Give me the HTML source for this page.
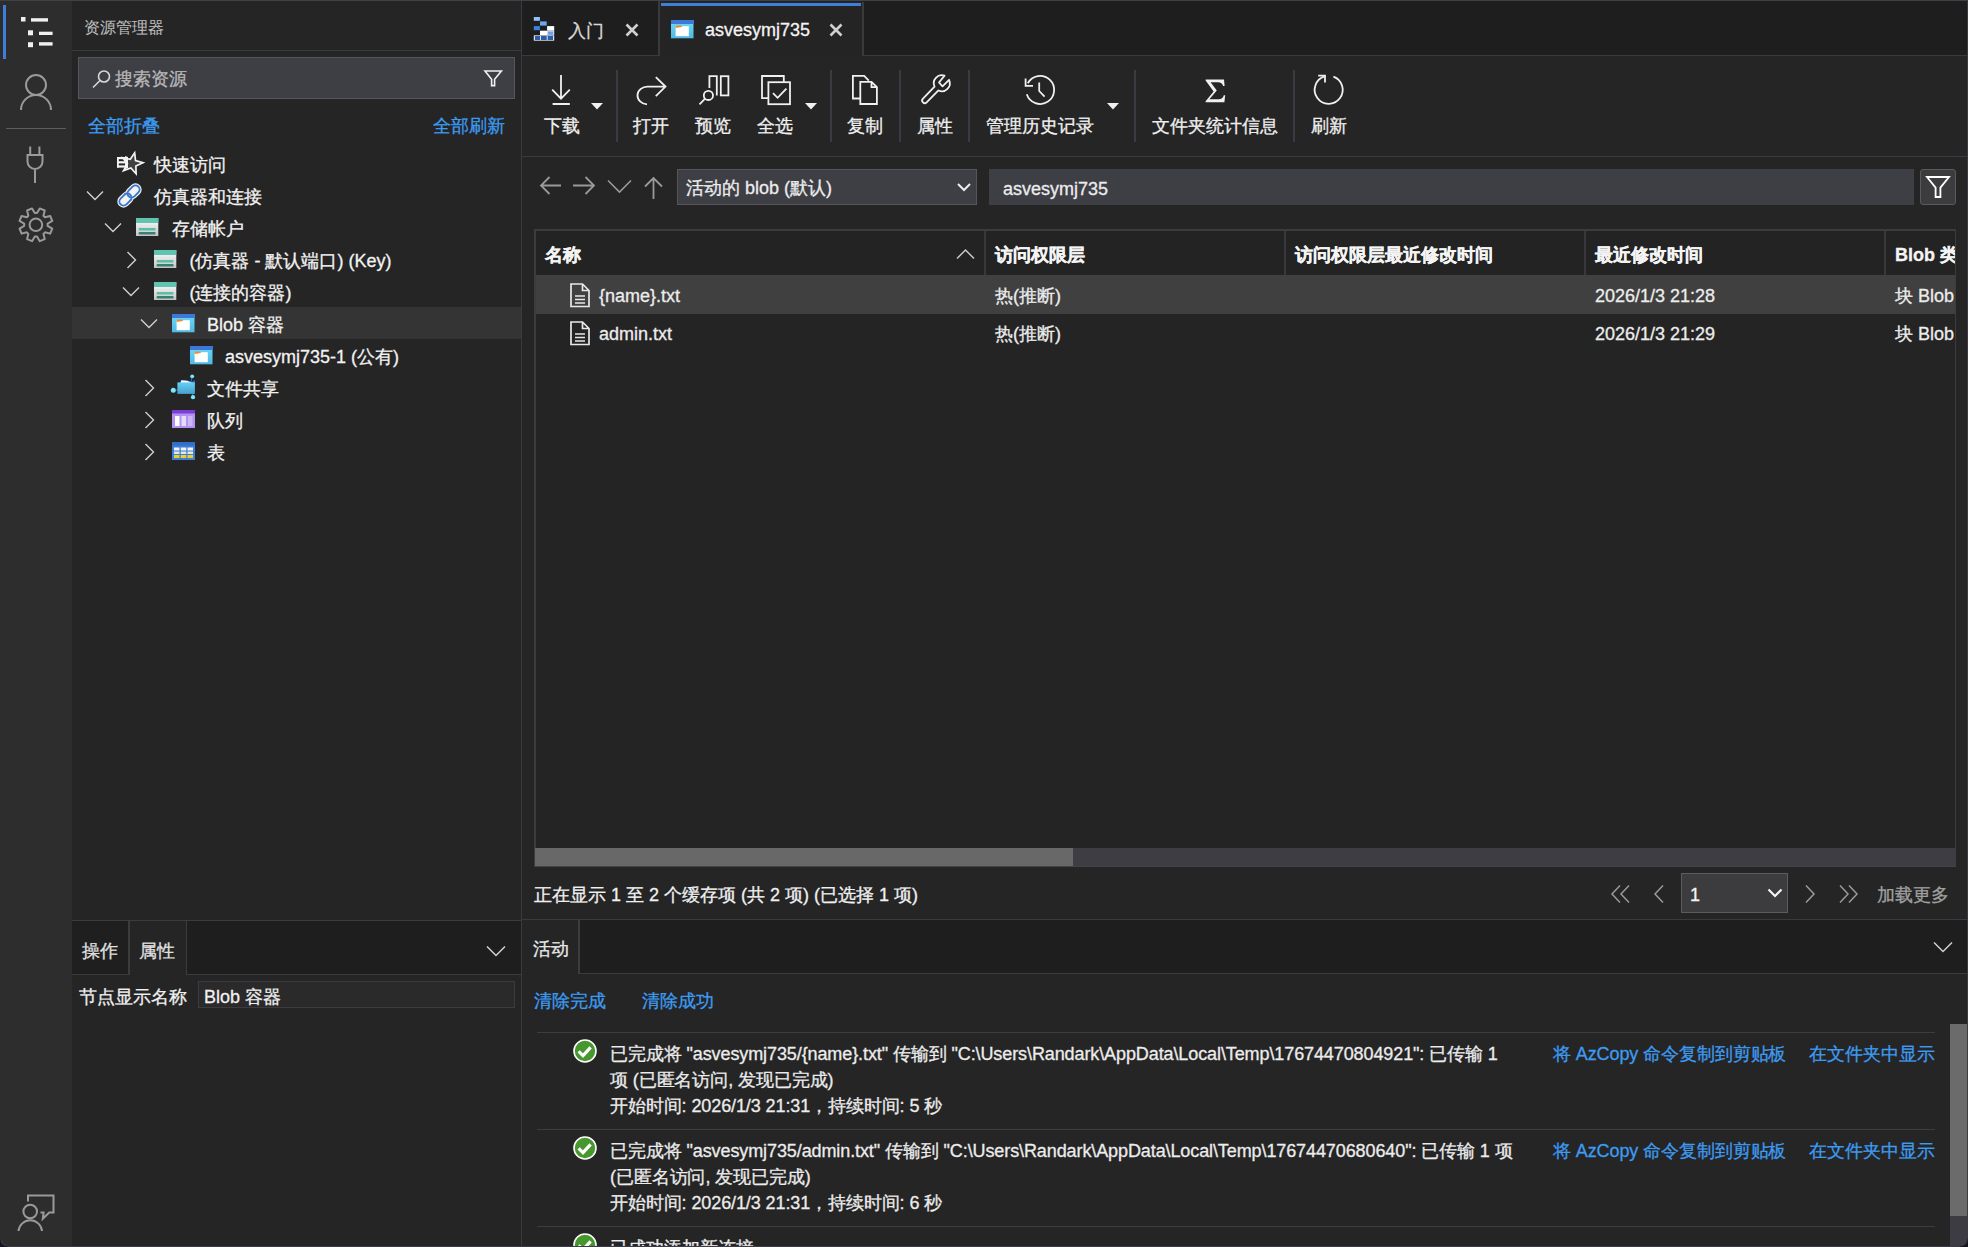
<!DOCTYPE html>
<html><head><meta charset="utf-8">
<style>
*{box-sizing:border-box}
html,body{margin:0;padding:0}
body{width:1968px;height:1247px;overflow:hidden;position:relative;background:#252525;font-family:"Liberation Sans",sans-serif;color:#e8e8e8;font-size:18px}
.a{position:absolute}
.t{position:absolute;white-space:nowrap;line-height:1;margin-top:1px;-webkit-text-stroke:0.3px currentColor}
svg{position:absolute;overflow:visible}
.hl{position:absolute;height:1px;background:#3a3a40}
.vl{position:absolute;width:1px;background:#3a3a40}
.lnk{color:#3d9bf0}
</style></head><body>
<!-- top border -->
<div class="a" style="left:0;top:0;width:1968px;height:1px;background:#404048"></div>

<!-- ACTIVITY BAR -->
<div id="act" class="a" style="left:0;top:1px;width:72px;height:1246px;background:#2d2d2d"></div>
<div class="a" style="left:3px;top:5px;width:3px;height:54px;background:#3b7fd8"></div>


<!-- activity icons -->
<svg style="left:0;top:0" width="72" height="260">
 <g fill="#f0f0f0">
  <rect x="21" y="17" width="4.5" height="4.5"/><rect x="31" y="18.2" width="17" height="3.4"/>
  <rect x="28" y="30.3" width="5" height="5"/><rect x="39" y="31.7" width="13.6" height="3.3"/>
  <rect x="28" y="42.2" width="5" height="5"/><rect x="39" y="42.2" width="13.6" height="3.4"/>
 </g>
 <g fill="none" stroke="#9a9a9a" stroke-width="2">
  <circle cx="36" cy="85" r="10"/>
  <path d="M21 110 A15 15 0 0 1 51 110"/>
  <path d="M30.2 146.5 V155 M39.4 146.5 V155 M27.5 155 H42.5 V161.5 A7.5 7.5 0 0 1 27.5 161.5 Z M35 169 V183"/>
  <circle cx="35.9" cy="224.8" r="6.3"/>
  <path d="M36.99 213.05 L39.77 208.45 L44.72 210.50 L43.44 215.72 L44.98 217.26 L50.20 215.98 L52.25 220.93 L47.65 223.71 L47.65 225.89 L52.25 228.67 L50.20 233.62 L44.98 232.34 L43.44 233.88 L44.72 239.10 L39.77 241.15 L36.99 236.55 L34.81 236.55 L32.03 241.15 L27.08 239.10 L28.36 233.88 L26.82 232.34 L21.60 233.62 L19.55 228.67 L24.15 225.89 L24.15 223.71 L19.55 220.93 L21.60 215.98 L26.82 217.26 L28.36 215.72 L27.08 210.50 L32.03 208.45 L34.81 213.05 Z" stroke-linejoin="round"/>
 </g>
 <rect x="6" y="128" width="60" height="1" fill="#5e5e5e"/>
</svg>
<svg style="left:0;top:1180" width="72" height="67">
 <g fill="none" stroke="#9a9a9a" stroke-width="2">
  <path d="M28 21.5 V15.5 H53.5 V32.5 H49.2 L42.8 38.8 L43.6 32.5 H40.5"/>
  <circle cx="30.2" cy="31.5" r="6.8"/>
  <path d="M18.5 51 A11.8 11.8 0 0 1 42 51"/>
 </g>
</svg>

<!-- EXPLORER PANEL -->
<div id="exp" class="a" style="left:72px;top:1px;width:449px;height:1246px;background:#252525"></div>

<div class="t" style="left:84px;top:19px;font-size:16px;color:#bcbcbc;-webkit-text-stroke:0.1px currentColor">资源管理器</div>
<div class="hl" style="left:72px;top:50px;width:449px;background:#3a3a40"></div>
<div class="a" style="left:78px;top:57px;width:437px;height:42px;background:#3e3f45;border:1px solid #56565c"></div>
<svg style="left:90px;top:68px" width="24" height="24"><g fill="none" stroke="#d8d8d8" stroke-width="1.6"><circle cx="14" cy="8.5" r="5.5"/><path d="M10 12.5 L3 19.5"/></g></svg>
<div class="t" style="left:115px;top:69px;font-size:18px;color:#b8b8b8">搜索资源</div>
<svg style="left:0;top:0" width="520" height="120"><path d="M485 71 H501.4 L494.6 79.2 V85.6 H491.6 V79.2 Z" fill="none" stroke="#f0f0f0" stroke-width="1.6" stroke-linejoin="miter"/></svg>
<div class="t lnk" style="left:88px;top:116px;font-size:18px">全部折叠</div>
<div class="t lnk" style="left:433px;top:116px;font-size:18px">全部刷新</div>
<!-- selected row -->
<div class="a" style="left:72px;top:307px;width:449px;height:32px;background:#343434"></div>
<svg style="left:117px;top:152px" width="26" height="26"><path d="M17.66 0.83 L18.52 8.54 L25.97 10.73 L18.90 13.94 L19.12 21.70 L13.89 15.96 L6.57 18.57 L10.41 11.82 L5.67 5.67 L13.28 7.23 Z" fill="#404040" stroke="#f4f4f4" stroke-width="1.7" stroke-linejoin="miter"/><g fill="#f4f4f4"><rect x="0" y="5" width="9" height="2.2"/><rect x="0" y="9.2" width="9" height="2.2"/><rect x="0" y="13.4" width="9" height="2.2"/><rect x="0" y="5" width="1.8" height="10.6"/><path d="M8 4 L11 5 L11 16 L8 17 Z"/></g></svg>
<div class="t" style="left:154px;top:155px;font-size:18px;color:#f2f2f2">快速访问</div>
<svg style="left:86px;top:190px" width="18" height="12"><path d="M1 1.5 L9 9.5 L17 1.5" fill="none" stroke="#d0d0d0" stroke-width="1.4"/></svg>
<svg style="left:116px;top:182px" width="27" height="27"><g transform="translate(9.5 17.5) rotate(-45)"><rect x="-8.2" y="-5.4" width="16.4" height="10.8" rx="5.4" fill="#f4f4f4" stroke="#f4f4f4" stroke-width="1.6"/><rect x="-6.9" y="-4.1" width="13.8" height="8.2" rx="4.1" fill="none" stroke="#3a78d0" stroke-width="1.9"/></g><g transform="translate(17.5 9.5) rotate(-45)"><rect x="-8.2" y="-5.4" width="16.4" height="10.8" rx="5.4" fill="#f4f4f4" stroke="#f4f4f4" stroke-width="1.6"/><rect x="-6.9" y="-4.1" width="13.8" height="8.2" rx="4.1" fill="none" stroke="#3a78d0" stroke-width="1.9"/></g><g transform="translate(9.5 17.5) rotate(-45)"><path d="M2.6 -4.1 A4.1 4.1 0 0 1 2.6 4.1" fill="none" stroke="#3a78d0" stroke-width="1.9"/></g></svg>
<div class="t" style="left:154px;top:187px;font-size:18px;color:#f2f2f2">仿真器和连接</div>
<svg style="left:104px;top:222px" width="18" height="12"><path d="M1 1.5 L9 9.5 L17 1.5" fill="none" stroke="#d0d0d0" stroke-width="1.4"/></svg>
<svg style="left:135.6px;top:218px" width="23" height="18"><defs><linearGradient id="sg" x1="0" y1="0" x2="0" y2="1"><stop offset="0" stop-color="#ffffff"/><stop offset="1" stop-color="#c4c4c4"/></linearGradient></defs><rect x="0" y="0" width="22.3" height="18" fill="url(#sg)"/><rect x="0" y="0" width="22.3" height="5" fill="#62c4b0"/><rect x="2.6" y="10" width="17" height="2.6" rx="1" fill="#56c0a8"/><rect x="2.6" y="14" width="17" height="2.6" rx="1" fill="#3a7f70"/></svg>
<div class="t" style="left:171.6px;top:219px;font-size:18px;color:#f2f2f2">存储帐户</div>
<svg style="left:126px;top:251px" width="12" height="18"><path d="M1.5 1 L9.5 9 L1.5 17" fill="none" stroke="#d0d0d0" stroke-width="1.4"/></svg>
<svg style="left:154px;top:250px" width="23" height="18"><defs><linearGradient id="sg" x1="0" y1="0" x2="0" y2="1"><stop offset="0" stop-color="#ffffff"/><stop offset="1" stop-color="#c4c4c4"/></linearGradient></defs><rect x="0" y="0" width="22.3" height="18" fill="url(#sg)"/><rect x="0" y="0" width="22.3" height="5" fill="#62c4b0"/><rect x="2.6" y="10" width="17" height="2.6" rx="1" fill="#56c0a8"/><rect x="2.6" y="14" width="17" height="2.6" rx="1" fill="#3a7f70"/></svg>
<div class="t" style="left:189.5px;top:251px;font-size:18px;color:#f2f2f2">(仿真器 - 默认端口) (Key)</div>
<svg style="left:122px;top:286px" width="18" height="12"><path d="M1 1.5 L9 9.5 L17 1.5" fill="none" stroke="#d0d0d0" stroke-width="1.4"/></svg>
<svg style="left:154px;top:282px" width="23" height="18"><defs><linearGradient id="sg" x1="0" y1="0" x2="0" y2="1"><stop offset="0" stop-color="#ffffff"/><stop offset="1" stop-color="#c4c4c4"/></linearGradient></defs><rect x="0" y="0" width="22.3" height="18" fill="url(#sg)"/><rect x="0" y="0" width="22.3" height="5" fill="#62c4b0"/><rect x="2.6" y="10" width="17" height="2.6" rx="1" fill="#56c0a8"/><rect x="2.6" y="14" width="17" height="2.6" rx="1" fill="#3a7f70"/></svg>
<div class="t" style="left:189.5px;top:283px;font-size:18px;color:#f2f2f2">(连接的容器)</div>
<svg style="left:140px;top:318px" width="18" height="12"><path d="M1 1.5 L9 9.5 L17 1.5" fill="none" stroke="#d0d0d0" stroke-width="1.4"/></svg>
<svg style="left:171.6px;top:314px" width="23" height="18"><defs><linearGradient id="bg1" x1="0" y1="0" x2="0" y2="1"><stop offset="0" stop-color="#6cdaf8"/><stop offset="1" stop-color="#52b8e4"/></linearGradient></defs><rect x="0" y="0" width="22.5" height="18.3" fill="url(#bg1)"/><rect x="0" y="0" width="22.5" height="4" fill="#3b78d8"/><rect x="4.6" y="6.2" width="13.2" height="10" fill="#ffffff"/><path d="M4.6 8 V6 Q4.6 5.4 5.4 5.4 H10 Q10.8 5.4 10.8 6.4 V7 Z" fill="#f08a2c"/></svg>
<div class="t" style="left:207px;top:315px;font-size:18px;color:#f2f2f2">Blob 容器</div>
<svg style="left:190px;top:346px" width="23" height="18"><defs><linearGradient id="bg1" x1="0" y1="0" x2="0" y2="1"><stop offset="0" stop-color="#6cdaf8"/><stop offset="1" stop-color="#52b8e4"/></linearGradient></defs><rect x="0" y="0" width="22.5" height="18.3" fill="url(#bg1)"/><rect x="0" y="0" width="22.5" height="4" fill="#3b78d8"/><rect x="4.6" y="6.2" width="13.2" height="10" fill="#ffffff"/><path d="M4.6 8 V6 Q4.6 5.4 5.4 5.4 H10 Q10.8 5.4 10.8 6.4 V7 Z" fill="#f08a2c"/></svg>
<div class="t" style="left:225px;top:347px;font-size:18px;color:#f2f2f2">asvesymj735-1 (公有)</div>
<svg style="left:144px;top:379px" width="12" height="18"><path d="M1.5 1 L9.5 9 L1.5 17" fill="none" stroke="#d0d0d0" stroke-width="1.4"/></svg>
<svg style="left:165px;top:370px" width="35" height="35"><defs><linearGradient id="fsg" x1="0" y1="0" x2="0" y2="1"><stop offset="0" stop-color="#66d2f4"/><stop offset="1" stop-color="#489ed0"/></linearGradient></defs><path d="M26.8 8 L26.4 11.5 M11 20.1 H13 M27.2 23.5 L27.9 25.5" stroke="#2f6fc4" stroke-width="1"/><path d="M14.8 12.5 L16 10 L22 10.4 L27 11.6 L30 10.2 V13 H14.8 Z" fill="#2a66c0"/><path d="M15.8 12.2 L16.4 10.2 L22 10.8 L26.6 12.6 L26.6 13.2 H15.8 Z" fill="#f4f8ff"/><rect x="12.4" y="12.4" width="17.5" height="11.5" fill="url(#fsg)"/><circle cx="27.2" cy="6.3" r="1.9" fill="#7ae6fa"/><circle cx="8.3" cy="20.2" r="2.5" fill="#7ae6fa"/><circle cx="28" cy="27.2" r="2.1" fill="#7ae6fa"/></svg>
<div class="t" style="left:207px;top:379px;font-size:18px;color:#f2f2f2">文件共享</div>
<svg style="left:144px;top:411px" width="12" height="18"><path d="M1.5 1 L9.5 9 L1.5 17" fill="none" stroke="#d0d0d0" stroke-width="1.4"/></svg>
<svg style="left:171.6px;top:410px" width="23" height="18"><rect x="0" y="0" width="23" height="18" fill="#b393f0"/><rect x="0" y="0" width="23" height="3.5" fill="#7a3fd6"/><rect x="3" y="6" width="4.5" height="10" fill="#ffffff"/><rect x="9.5" y="6" width="4.5" height="10" fill="#e6dcfa"/><rect x="16" y="6" width="4.5" height="10" fill="#cbb6f6"/></svg>
<div class="t" style="left:207px;top:411px;font-size:18px;color:#f2f2f2">队列</div>
<svg style="left:144px;top:443px" width="12" height="18"><path d="M1.5 1 L9.5 9 L1.5 17" fill="none" stroke="#d0d0d0" stroke-width="1.4"/></svg>
<svg style="left:171.6px;top:442px" width="23" height="18"><rect x="0" y="0" width="23" height="18" fill="#3d7fd6"/><rect x="0" y="0" width="23" height="3.5" fill="#3070c8"/><g fill="#f4f4f4"><rect x="2" y="5.5" width="5.5" height="3"/><rect x="8.8" y="5.5" width="5.5" height="3"/><rect x="15.5" y="5.5" width="5.5" height="3"/></g><g fill="#e6e6e6"><rect x="2" y="9.5" width="5.5" height="2.5"/><rect x="8.8" y="9.5" width="5.5" height="2.5"/><rect x="15.5" y="9.5" width="5.5" height="2.5"/></g><g fill="#f0d020"><rect x="2" y="13" width="5.5" height="3"/><rect x="8.8" y="13" width="5.5" height="3"/><rect x="15.5" y="13" width="5.5" height="3"/></g></svg>
<div class="t" style="left:207px;top:443px;font-size:18px;color:#f2f2f2">表</div>
<div class="vl" style="left:521px;top:1px;height:1246px;background:#3a3a40"></div>

<!-- MAIN -->
<div id="tabbar" class="a" style="left:522px;top:1px;width:1446px;height:55px;background:#1e1e1e"></div>


<!-- tabs -->
<div class="a" style="left:522px;top:1px;width:138px;height:55px;background:#1e1e1e;border-right:2px solid #3a3a3a;border-bottom:1px solid #3a3a3a"></div>
<div class="a" style="left:864px;top:55px;width:1104px;height:1px;background:#3a3a3a"></div>
<div class="a" style="left:660px;top:1px;width:202px;height:55px;background:#242424"></div>
<div class="a" style="left:862px;top:2px;width:2px;height:54px;background:#3a3a3a"></div>
<div class="a" style="left:661px;top:3px;width:200px;height:3px;background:#3b7fd8"></div>
<svg style="left:528px;top:12px" width="32" height="32"><rect x="5.8" y="5" width="6.1" height="3.8" fill="#92c0fa"/><rect x="12" y="9.4" width="6.7" height="4.2" fill="#6ea6f2"/><rect x="5.8" y="14.1" width="6.1" height="4.1" fill="#3d80e0"/><rect x="19.1" y="14.1" width="7.1" height="4.6" fill="#ffffff"/><rect x="12" y="18.7" width="7.1" height="4.3" fill="#ffffff"/><rect x="19.1" y="18.7" width="7.1" height="4.3" fill="#dfe8f6"/><rect x="20" y="19.5" width="5.2" height="3.3" fill="#6aa0ee"/><rect x="5.8" y="23.3" width="20.4" height="5.4" fill="#e4e4e4"/><rect x="7" y="24" width="5" height="4" fill="#2a5cb0"/><rect x="13" y="24" width="5.7" height="4" fill="#2a5cb0"/><rect x="19.7" y="24" width="5.3" height="4" fill="#2a5cb0"/></svg>
<div class="t" style="left:568px;top:21px;font-size:18px;color:#d8d8d8">入门</div>
<svg style="left:625px;top:23px" width="14" height="14"><path d="M1.5 1.5 L12.5 12.5 M12.5 1.5 L1.5 12.5" stroke="#d0d0d0" stroke-width="2.6"/></svg>
<svg style="left:671px;top:20px" width="23" height="19"><defs><linearGradient id="bg1" x1="0" y1="0" x2="0" y2="1"><stop offset="0" stop-color="#6cdaf8"/><stop offset="1" stop-color="#52b8e4"/></linearGradient></defs><rect x="0" y="0" width="22.5" height="18.3" fill="url(#bg1)"/><rect x="0" y="0" width="22.5" height="4" fill="#3b78d8"/><rect x="4.6" y="6.2" width="13.2" height="10" fill="#ffffff"/><path d="M4.6 8 V6 Q4.6 5.4 5.4 5.4 H10 Q10.8 5.4 10.8 6.4 V7 Z" fill="#f08a2c"/></svg>
<div class="t" style="left:705px;top:20px;font-size:18px;color:#f4f4f4">asvesymj735</div>
<svg style="left:829px;top:23px" width="14" height="14"><path d="M1.5 1.5 L12.5 12.5 M12.5 1.5 L1.5 12.5" stroke="#d0d0d0" stroke-width="2.6"/></svg>

<!-- toolbar -->
<div class="hl" style="left:522px;top:156px;width:1446px;background:#3a3a40"></div>
<div class="a" style="left:616px;top:70px;width:2px;height:72px;background:#3a3a42"></div>
<div class="a" style="left:830px;top:70px;width:2px;height:72px;background:#3a3a42"></div>
<div class="a" style="left:899px;top:70px;width:2px;height:72px;background:#3a3a42"></div>
<div class="a" style="left:968px;top:70px;width:2px;height:72px;background:#3a3a42"></div>
<div class="a" style="left:1134px;top:70px;width:2px;height:72px;background:#3a3a42"></div>
<div class="a" style="left:1293px;top:70px;width:2px;height:72px;background:#3a3a42"></div>
<div class="t" style="left:462px;width:200px;text-align:center;top:116px;font-size:18px;color:#f0f0f0">下载</div>
<div class="t" style="left:551px;width:200px;text-align:center;top:116px;font-size:18px;color:#f0f0f0">打开</div>
<div class="t" style="left:613px;width:200px;text-align:center;top:116px;font-size:18px;color:#f0f0f0">预览</div>
<div class="t" style="left:675px;width:200px;text-align:center;top:116px;font-size:18px;color:#f0f0f0">全选</div>
<div class="t" style="left:765px;width:200px;text-align:center;top:116px;font-size:18px;color:#f0f0f0">复制</div>
<div class="t" style="left:834.5px;width:200px;text-align:center;top:116px;font-size:18px;color:#f0f0f0">属性</div>
<div class="t" style="left:940px;width:200px;text-align:center;top:116px;font-size:18px;color:#f0f0f0">管理历史记录</div>
<div class="t" style="left:1114.5px;width:200px;text-align:center;top:116px;font-size:18px;color:#f0f0f0">文件夹统计信息</div>
<div class="t" style="left:1229px;width:200px;text-align:center;top:116px;font-size:18px;color:#f0f0f0">刷新</div>
<svg style="left:591px;top:102.8px" width="12" height="7"><path d="M0 0 H12 L6 6.5 Z" fill="#f0f0f0"/></svg>
<svg style="left:805px;top:102.8px" width="12" height="7"><path d="M0 0 H12 L6 6.5 Z" fill="#f0f0f0"/></svg>
<svg style="left:1106.5px;top:102.8px" width="12" height="7"><path d="M0 0 H12 L6 6.5 Z" fill="#f0f0f0"/></svg>

<svg style="left:0;top:0" width="1968" height="240"><path d="M1205.6 79.4 H1224 L1224.6 86 H1223.2 Q1222.2 82.2 1218 82.2 H1210.6 L1216.8 90.6 L1209.4 99.2 H1218.6 Q1222.8 99.2 1223.8 95.2 H1225.2 L1224.4 102.2 H1205.6 V101.2 L1213.6 91.4 L1205.6 80.6 Z" fill="#f0f0f0"/></svg>


<!-- toolbar icons overlay -->
<svg style="left:0;top:0" width="1968" height="240">
<g fill="none" stroke="#f0f0f0" stroke-width="1.8">
 <path d="M561 75 V99 M552.2 89.6 L561 98.6 L569.8 89.6 M552.6 104 H569.8"/>
 <path d="M665.5 86.6 H648 A10 8.9 0 0 0 647 104.4 M655.8 77.2 L665.5 86.6 L655.8 96.2"/>
 <path d="M709.4 88 V76.2 H716.8 V95.4"/><rect x="720.8" y="76.2" width="7.6" height="19.2"/>
 <circle cx="708.4" cy="95.4" r="4.6"/><path d="M705.1 98.7 L699.5 104.3"/>
 <path d="M768 98.2 H762 V76 H783.8 V82"/><rect x="768.4" y="82.2" width="21.6" height="22"/><path d="M773 93.2 L777.6 97.8 L786.4 88.6"/>
 <path d="M860.2 98.5 H852.9 V75.9 H864.2 L868.8 80.6"/><path d="M860.3 104 V81.8 H871.5 L876.9 87.2 V104 Z M871.5 81.8 V87.2 H876.9"/>
 <path stroke-linejoin="round" d="M934.55 86.58 A8 8 0 0 1 944.54 75.68 L939 82.5 L942.5 86.4 L949.05 79.82 A8 8 0 0 1 938.42 90.45 L926.64 102.34 A2.6 2.6 0 0 1 922.96 98.66 Z"/>
 <path d="M1027.8 83.3 A14 14 0 1 1 1026.8 94.3"/><path d="M1025.6 78.4 V85.8 H1033"/><path d="M1039.2 82.6 V91 L1044.6 96.6"/>
 <path d="M1324.6 76.4 A14 14 0 1 0 1333.4 76.6"/><path d="M1318.2 75.7 H1325 V82.6"/>
</g>
</svg>

<!-- address row -->
<svg style="left:538px;top:175px" width="26" height="22"><g fill="none" stroke="#9a9a9a" stroke-width="1.8"><path d="M23 10.5 H3 M11.5 2 L3 10.5 L11.5 19"/></g></svg>
<svg style="left:572px;top:175px" width="26" height="22"><g fill="none" stroke="#9a9a9a" stroke-width="1.8"><path d="M1 10.5 H22 M13.5 2 L22 10.5 L13.5 19"/></g></svg>
<svg style="left:607px;top:179px" width="26" height="16"><g fill="none" stroke="#9a9a9a" stroke-width="1.6"><path d="M1 1.5 L12.5 13 L24 1.5"/></g></svg>
<svg style="left:643px;top:176px" width="24" height="24"><g fill="none" stroke="#9a9a9a" stroke-width="1.8"><path d="M10.5 23 V2 M2 10.5 L10.5 2 L19 10.5"/></g></svg>
<div class="a" style="left:677px;top:169px;width:300px;height:36px;background:#3e3f45;border:1px solid #55555b"></div>
<div class="t" style="left:686px;top:178px;font-size:18px;color:#ececec">活动的 blob (默认)</div>
<svg style="left:957px;top:183px" width="14" height="9"><path d="M1 1 L7 7 L13 1" fill="none" stroke="#ececec" stroke-width="2"/></svg>
<div class="a" style="left:989px;top:169px;width:925px;height:36px;background:#3e3f45"></div>
<div class="t" style="left:1003px;top:179px;font-size:18px;color:#ececec">asvesymj735</div>
<div class="a" style="left:1920px;top:169px;width:36px;height:36px;background:#3c3c3e;border:1px solid #5a5a5a;border-radius:3px"></div>
<svg style="left:0;top:0" width="1968" height="240"><path d="M1927 177 H1949 L1940.4 187.6 V197 H1935.6 V187.6 Z" fill="none" stroke="#ffffff" stroke-width="1.8"/></svg>


<!-- TABLE -->
<div class="a" style="left:534px;top:229px;width:1422px;height:638px;border:2px solid #3c3c3c;border-right:1px solid #3c3c3c;border-bottom:1px solid #444444;background:#242424"></div>
<div class="a" style="left:536px;top:231px;width:1419px;height:44px;background:#232323"></div>
<div class="a" style="left:536px;top:275px;width:1419px;height:39px;background:#404040"></div>
<div class="a" style="left:984px;top:231px;width:2px;height:44px;background:#38383c"></div>
<div class="a" style="left:1284px;top:231px;width:2px;height:44px;background:#38383c"></div>
<div class="a" style="left:1584px;top:231px;width:2px;height:44px;background:#38383c"></div>
<div class="a" style="left:1884px;top:231px;width:2px;height:44px;background:#38383c"></div>
<div class="a" style="left:536px;top:231px;width:1419px;height:44px;overflow:hidden">
<div class="t" style="left:9px;top:14px;font-size:18px;font-weight:bold;color:#f4f4f4">名称</div>
<div class="t" style="left:459px;top:14px;font-size:18px;font-weight:bold;color:#f4f4f4">访问权限层</div>
<div class="t" style="left:759px;top:14px;font-size:18px;font-weight:bold;color:#f4f4f4">访问权限层最近修改时间</div>
<div class="t" style="left:1059px;top:14px;font-size:18px;font-weight:bold;color:#f4f4f4">最近修改时间</div>
<div class="t" style="left:1359px;top:14px;font-size:18px;font-weight:bold;color:#f4f4f4">Blob 类型</div>
</div>
<svg style="left:956px;top:248px" width="20" height="12"><path d="M1 10.5 L9.5 2 L18 10.5" fill="none" stroke="#c8c8c8" stroke-width="1.5"/></svg>
<div class="a" style="left:536px;top:275px;width:1419px;height:80px;overflow:hidden">
<svg style="left:34px;top:8px" width="21" height="25"><path d="M1 1 H12.5 L19 7.5 V23.5 H1 Z M12.5 1 V7.5 H19" fill="none" stroke="#e8e8e8" stroke-width="1.7"/><path d="M5 13 H15 M5 16.5 H15 M5 20 H15" stroke="#e8e8e8" stroke-width="1.5"/></svg>
<div class="t" style="left:63px;top:11px;font-size:18px;color:#ececec">{name}.txt</div>
<div class="t" style="left:459px;top:11px;font-size:18px;color:#ececec">热(推断)</div>
<div class="t" style="left:1059px;top:11px;font-size:18px;color:#ececec">2026/1/3 21:28</div>
<div class="t" style="left:1359px;top:11px;font-size:18px;color:#ececec">块 Blob</div>
<svg style="left:34px;top:46px" width="21" height="25"><path d="M1 1 H12.5 L19 7.5 V23.5 H1 Z M12.5 1 V7.5 H19" fill="none" stroke="#e8e8e8" stroke-width="1.7"/><path d="M5 13 H15 M5 16.5 H15 M5 20 H15" stroke="#e8e8e8" stroke-width="1.5"/></svg>
<div class="t" style="left:63px;top:49px;font-size:18px;color:#ececec">admin.txt</div>
<div class="t" style="left:459px;top:49px;font-size:18px;color:#ececec">热(推断)</div>
<div class="t" style="left:1059px;top:49px;font-size:18px;color:#ececec">2026/1/3 21:29</div>
<div class="t" style="left:1359px;top:49px;font-size:18px;color:#ececec">块 Blob</div>
</div>

<!-- h scrollbar -->
<div class="a" style="left:535px;top:848px;width:1421px;height:18px;background:#3e3d43"></div>
<div class="a" style="left:535px;top:848px;width:538px;height:18px;background:#686868"></div>

<!-- status row -->
<div class="t" style="left:534px;top:885px;font-size:18px;color:#f0f0f0">正在显示 1 至 2 个缓存项 (共 2 项) (已选择 1 项)</div>
<svg style="left:1610px;top:884px" width="22" height="20"><path d="M10 1.5 L2 10 L10 18.5 M19 1.5 L11 10 L19 18.5" fill="none" stroke="#9a9a9a" stroke-width="1.5"/></svg>
<svg style="left:1652px;top:884px" width="14" height="20"><path d="M11 1.5 L3 10 L11 18.5" fill="none" stroke="#9a9a9a" stroke-width="1.5"/></svg>
<div class="a" style="left:1681px;top:873px;width:107px;height:40px;background:#3c3c3e;border:1px solid #5c5c60"></div>
<div class="t" style="left:1690px;top:885px;font-size:18px;color:#f4f4f4">1</div>
<svg style="left:1767px;top:888px" width="16" height="10"><path d="M1.5 1.5 L8 8 L14.5 1.5" fill="none" stroke="#f4f4f4" stroke-width="2.2"/></svg>
<svg style="left:1803px;top:884px" width="14" height="20"><path d="M3 1.5 L11 10 L3 18.5" fill="none" stroke="#9a9a9a" stroke-width="1.5"/></svg>
<svg style="left:1837px;top:884px" width="22" height="20"><path d="M3 1.5 L11 10 L3 18.5 M12 1.5 L20 10 L12 18.5" fill="none" stroke="#9a9a9a" stroke-width="1.5"/></svg>
<div class="t" style="left:1877px;top:885px;font-size:18px;color:#a0a0a0">加载更多</div>

<!-- ACTIVITY PANEL -->
<div class="a" style="left:522px;top:919px;width:1446px;height:1px;background:#3a3a40"></div>
<div class="a" style="left:578px;top:920px;width:1389px;height:54px;background:#1e1e1e;border-left:2px solid #3c3c3c;border-bottom:1px solid #3c3c3c"></div>
<div class="t" style="left:533px;top:939px;font-size:18px;color:#e8e8e8">活动</div>
<svg style="left:1933px;top:941px" width="20" height="13"><path d="M1 1.5 L10 10.5 L19 1.5" fill="none" stroke="#d0d0d0" stroke-width="1.5"/></svg>
<div class="t lnk" style="left:534px;top:991px;font-size:18px">清除完成</div>
<div class="t lnk" style="left:642px;top:991px;font-size:18px">清除成功</div>
<div class="a" style="left:537px;top:1032px;width:1398px;height:1px;background:#3c3c42"></div>
<div class="a" style="left:537px;top:1129px;width:1398px;height:1px;background:#3c3c42"></div>
<div class="a" style="left:537px;top:1226px;width:1398px;height:1px;background:#3c3c42"></div>
<svg style="left:573px;top:1039px" width="24" height="24"><circle cx="12" cy="12" r="11" fill="#46982e" stroke="#ffffff" stroke-width="1.6"/><path d="M5.6 12.4 L10 16.6 L17.6 8.4" fill="none" stroke="#ffffff" stroke-width="3.2"/></svg>
<div class="t" style="left:610px;top:1044px;font-size:18px;color:#ececec;letter-spacing:-0.1px">已完成将 "asvesymj735/{name}.txt" 传输到 "C:\Users\Randark\AppData\Local\Temp\17674470804921": 已传输 1</div>
<div class="t" style="left:610px;top:1070px;font-size:18px;color:#ececec;letter-spacing:-0.1px">项 (已匿名访问, 发现已完成)</div>
<div class="t" style="left:610px;top:1096px;font-size:18px;color:#ececec;letter-spacing:-0.1px">开始时间: 2026/1/3 21:31，持续时间: 5 秒</div>
<div class="t lnk" style="left:1553px;top:1044px;font-size:18px;letter-spacing:-0.1px">将 AzCopy 命令复制到剪贴板</div>
<div class="t lnk" style="left:1809px;top:1044px;font-size:18px">在文件夹中显示</div>
<svg style="left:573px;top:1136px" width="24" height="24"><circle cx="12" cy="12" r="11" fill="#46982e" stroke="#ffffff" stroke-width="1.6"/><path d="M5.6 12.4 L10 16.6 L17.6 8.4" fill="none" stroke="#ffffff" stroke-width="3.2"/></svg>
<div class="t" style="left:610px;top:1141px;font-size:18px;color:#ececec;letter-spacing:-0.1px">已完成将 "asvesymj735/admin.txt" 传输到 "C:\Users\Randark\AppData\Local\Temp\17674470680640": 已传输 1 项</div>
<div class="t" style="left:610px;top:1167px;font-size:18px;color:#ececec;letter-spacing:-0.1px">(已匿名访问, 发现已完成)</div>
<div class="t" style="left:610px;top:1193px;font-size:18px;color:#ececec;letter-spacing:-0.1px">开始时间: 2026/1/3 21:31，持续时间: 6 秒</div>
<div class="t lnk" style="left:1553px;top:1141px;font-size:18px;letter-spacing:-0.1px">将 AzCopy 命令复制到剪贴板</div>
<div class="t lnk" style="left:1809px;top:1141px;font-size:18px">在文件夹中显示</div>
<svg style="left:573px;top:1233px" width="24" height="24"><circle cx="12" cy="12" r="11" fill="#46982e" stroke="#ffffff" stroke-width="1.6"/><path d="M5.6 12.4 L10 16.6 L17.6 8.4" fill="none" stroke="#ffffff" stroke-width="3.2"/></svg>
<div class="t" style="left:610px;top:1238px;font-size:18px;color:#ececec">已成功添加新连接</div>

<div class="a" style="left:1950px;top:1024px;width:17px;height:222px;background:#3d3c42"></div>
<div class="a" style="left:1950px;top:1024px;width:17px;height:192px;background:#6b6b6b"></div>

<!-- LEFT BOTTOM PANEL -->
<div class="a" style="left:72px;top:920px;width:449px;height:1px;background:#3c3c3c"></div>
<div class="a" style="left:72px;top:921px;width:58px;height:54px;background:#1f1f1f;border-right:2px solid #3c3c3c;border-bottom:1px solid #3c3c3c"></div>
<div class="a" style="left:186px;top:921px;width:335px;height:54px;background:#1e1e1e;border-left:1px solid #3c3c3c;border-bottom:1px solid #3c3c3c"></div>
<div class="t" style="left:82px;top:941px;font-size:18px;color:#e0e0e0">操作</div>
<div class="t" style="left:139px;top:941px;font-size:18px;color:#e0e0e0">属性</div>
<svg style="left:486px;top:945px" width="20" height="13"><path d="M1 1.5 L10 10.5 L19 1.5" fill="none" stroke="#d0d0d0" stroke-width="1.5"/></svg>
<div class="t" style="left:79px;top:987px;font-size:18px;color:#f0f0f0">节点显示名称</div>
<div class="a" style="left:198px;top:981px;width:317px;height:27px;background:#2a2a2b;border:1px solid #3c3c40"></div>
<div class="t" style="left:204px;top:987px;font-size:18px;color:#f0f0f0">Blob 容器</div>

<!-- window edges -->
<div class="a" style="left:1967px;top:0;width:1px;height:1247px;background:#3c3b44"></div>
<div class="a" style="left:0;top:1246px;width:1968px;height:1px;background:#3c3b44"></div>
<svg style="left:0;top:1239px" width="8" height="8"><path d="M0 0 V8 H8 V7 A7 7 0 0 1 1 0 Z" fill="#16141f"/><path d="M1 0 A7 7 0 0 0 8 7" fill="none" stroke="#3c3b44" stroke-width="1.2"/></svg>
<svg style="left:1960px;top:1239px" width="8" height="8"><path d="M8 0 V8 H0 V7 A7 7 0 0 0 7 0 Z" fill="#16141f"/><path d="M7 0 A7 7 0 0 1 0 7" fill="none" stroke="#3c3b44" stroke-width="1.2"/></svg>

</body></html>
